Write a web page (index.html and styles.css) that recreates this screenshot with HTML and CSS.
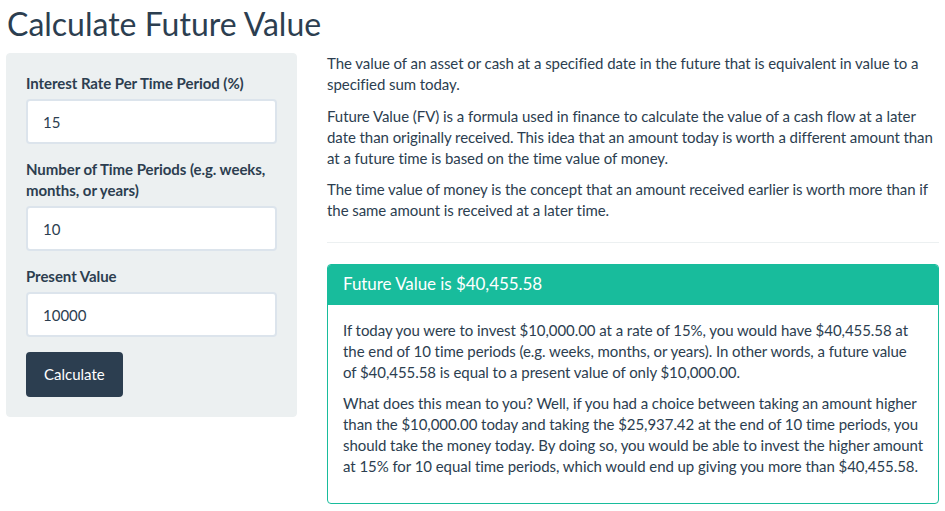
FILE: index.html
```html
<!DOCTYPE html>
<html lang="en">
<head>
<meta charset="utf-8">
<title>Calculate Future Value</title>
<link rel="stylesheet" href="styles.css">
</head>
<body>
<div class="page">
  <h1 class="title">Calculate Future Value</h1>
  <div class="row">
    <div class="col-left">
      <form class="well">
        <div class="form-group">
          <label class="label">Interest Rate Per Time Period (%)</label>
          <input class="input" type="text" value="15">
        </div>
        <div class="form-group">
          <label class="label">Number of Time Periods (e.g. weeks, months, or years)</label>
          <input class="input" type="text" value="10">
        </div>
        <div class="form-group">
          <label class="label">Present Value</label>
          <input class="input" type="text" value="10000">
        </div>
        <button class="btn" type="button">Calculate</button>
      </form>
    </div>
    <div class="col-right">
      <p class="para">The value of an asset or cash at a specified date in the future that is equivalent in value to a specified sum today.</p>
      <p class="para">Future Value (FV) is a formula used in finance to calculate the value of a cash flow at a later date than originally received. This idea that an amount today is worth a different amount than at a future time is based on the time value of money.</p>
      <p class="para">The time value of money is the concept that an amount received earlier is worth more than if the same amount is received at a later time.</p>
      <hr class="divider">
      <div class="panel">
        <div class="panel-heading">Future Value is $40,455.58</div>
        <div class="panel-body">
          <p class="para">If today you were to invest $10,000.00 at a rate of 15%, you would have $40,455.58 at the end of 10 time periods (e.g. weeks, months, or years). In other words, a future value of $40,455.58 is equal to a present value of only $10,000.00.</p>
          <p class="para">What does this mean to you? Well, if you had a choice between taking an amount higher than the $10,000.00 today and taking the $25,937.42 at the end of 10 time periods, you should take the money today. By doing so, you would be able to invest the higher amount at 15% for 10 equal time periods, which would end up giving you more than $40,455.58.</p>
        </div>
      </div>
    </div>
  </div>
</div>
</body>
</html>
```

FILE: styles.css
```css
* { box-sizing: border-box; }
html, body { margin: 0; padding: 0; background: #ffffff; }
body {
  font-family: Lato, "Open Sans", "Liberation Sans", sans-serif;
  font-size: 15px;
  line-height: 21px;
  letter-spacing: -0.06px;
  color: #2c3e50;
}
.page { padding: 0 6px 0 6px; }
.title {
  font-size: 32px;
  font-weight: 400;
  line-height: 1.1;
  letter-spacing: 0;
  margin: 6px 0 12px 1px;
  color: #2c3e50;
}
.row { display: flex; gap: 30px; align-items: flex-start; }
.col-left { width: 291px; flex: none; }
.col-right { width: 612px; flex: none; }
.well {
  background: #ecf0f1;
  border: 1px solid #ecf0f1;
  border-radius: 4px;
  padding: 19px;
  margin: 0 0 20px;
}
.form-group { margin-bottom: 15px; }
.label {
  display: block;
  font-weight: 700;
  margin-bottom: 5px;
}
.input {
  display: block;
  width: 100%;
  height: 45px;
  padding: 10px 15px;
  font-family: inherit;
  font-size: 15px;
  line-height: 21px;
  color: #2c3e50;
  background: #ffffff;
  border: 2px solid #dce4ec;
  border-radius: 4px;
  outline: none;
}
.btn {
  display: inline-block;
  height: 45px;
  padding: 10px 16px;
  font-family: inherit;
  font-size: 15px;
  line-height: 21px;
  color: #ffffff;
  background: #2c3e50;
  border: 2px solid #2c3e50;
  border-radius: 4px;
  cursor: pointer;
}
.para { margin: 0 0 10.5px; }
.divider {
  margin: 21px 0;
  border: 0;
  border-top: 1px solid #ecf0f1;
}
.panel {
  border: 1px solid #18bc9c;
  border-radius: 4px;
  margin-bottom: 21px;
  background: #ffffff;
}
.panel-heading {
  background: #18bc9c;
  color: #ffffff;
  padding: 10px 15px;
  font-size: 17px;
  line-height: 1.1;
  border-bottom: 1px solid #18bc9c;
  border-radius: 3px 3px 0 0;
}
.panel-body { padding: 15px; }
```
